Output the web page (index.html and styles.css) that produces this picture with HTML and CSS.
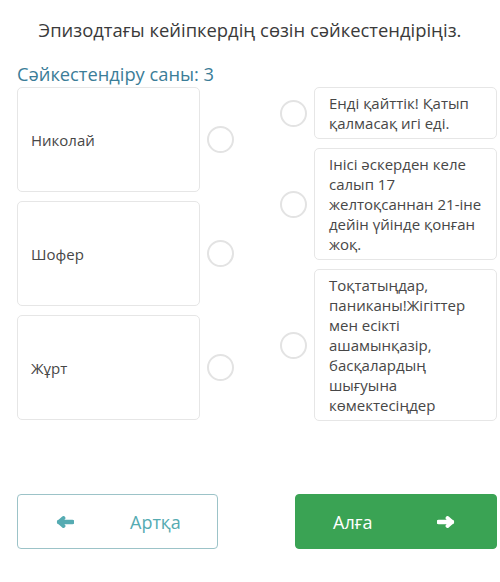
FILE: index.html
```html
<!DOCTYPE html>
<html>
<head>
<meta charset="utf-8">
<link rel="stylesheet" href="styles.css">
</head>
<body>
<div class="page">
  <h1 class="title">Эпизодтағы кейіпкердің сөзін сәйкестендіріңіз.</h1>
  <div class="count">Сәйкестендіру саны: 3</div>
  <div class="match">
    <div class="col left">
      <div class="row"><div class="card big">Николай</div><span class="dot"></span></div>
      <div class="row"><div class="card big">Шофер</div><span class="dot"></span></div>
      <div class="row"><div class="card big">Жұрт</div><span class="dot"></span></div>
    </div>
    <div class="col right">
      <div class="row"><span class="dot"></span><div class="card text">Енді қайттік! Қатып қалмасақ игі еді.</div></div>
      <div class="row"><span class="dot"></span><div class="card text">Інісі әскерден келе салып 17 желтоқсаннан 21-іне дейін үйінде қонған жоқ.</div></div>
      <div class="row"><span class="dot"></span><div class="card text">Тоқтатыңдар, паниканы!Жігіттер мен есікті ашамынқазір, басқалардың шығуына көмектесіңдер</div></div>
    </div>
  </div>
  <div class="nav">
    <button class="btn back">
      <svg class="arrow" viewBox="0 0 18 12" width="18" height="12"><path d="M3 6H16.5" stroke="currentColor" stroke-width="4.4" stroke-linecap="round"/><path d="M7.5 2L3 6L7.5 10" fill="none" stroke="currentColor" stroke-width="3.8" stroke-linecap="round" stroke-linejoin="round"/></svg>
      <span>Артқа</span>
    </button>
    <button class="btn next">
      <span>Алға</span>
      <svg class="arrow" viewBox="0 0 18 12" width="18" height="12"><path d="M1.5 6H15" stroke="currentColor" stroke-width="4.4" stroke-linecap="round"/><path d="M10.5 2L15 6L10.5 10" fill="none" stroke="currentColor" stroke-width="3.8" stroke-linecap="round" stroke-linejoin="round"/></svg>
    </button>
  </div>
</div>
</body>
</html>
```

FILE: styles.css
```css
html, body {
  margin: 0;
  padding: 0;
  background: #fff;
}
body {
  font-family: "Open Sans", "Noto Sans", sans-serif;
  color: #444;
}
.page {
  width: 500px;
  padding-top: 17px;
}
.title {
  margin: 0;
  font-size: 18.4px;
  font-weight: 400;
  color: #3a3a3a;
  text-align: center;
  line-height: 26px;
}
.count {
  margin: 19px 0 0 17px;
  font-size: 18.3px;
  line-height: 24px;
  color: #3b7d98;
}
.match {
  margin-top: 1px;
  padding: 0 3px 0 17px;
  display: flex;
  justify-content: space-between;
  align-items: flex-start;
}
.col {
  display: flex;
  flex-direction: column;
  gap: 9px;
}
.left { width: 217px; }
.right { width: 217px; }
.row {
  display: flex;
  align-items: center;
  justify-content: space-between;
}
.card {
  box-sizing: border-box;
  width: 183px;
  border: 1px solid #e6e6e6;
  border-radius: 5px;
  background: #fff;
  font-size: 15px;
  color: #474747;
}
.card.big {
  height: 105px;
  display: flex;
  align-items: center;
  padding: 0 13px;
}
.card.text {
  padding: 5px 10px 5px 14px;
  line-height: 20px;
}
.dot {
  box-sizing: border-box;
  width: 27px;
  height: 27px;
  border: 2px solid #e3e3e3;
  border-radius: 50%;
  flex: none;
}
.nav {
  display: flex;
  justify-content: space-between;
  padding: 0 3px 0 17px;
  margin-top: 73px;
}
.btn {
  box-sizing: border-box;
  height: 55px;
  border-radius: 4px;
  font-family: "Open Sans", "Noto Sans", sans-serif;
  font-size: 18px;
  display: flex;
  align-items: center;
  cursor: pointer;
}
.back {
  width: 201px;
  background: #fff;
  border: 1px solid #9cc3c8;
  color: #55abb2;
  padding: 0 0 0 38px;
  gap: 56px;
}
.next {
  width: 202px;
  background: #3aa354;
  border: 1px solid #3aa354;
  color: #fff;
  justify-content: space-between;
  padding: 0 41px 0 37px;
}
.arrow { display: block; }
```
